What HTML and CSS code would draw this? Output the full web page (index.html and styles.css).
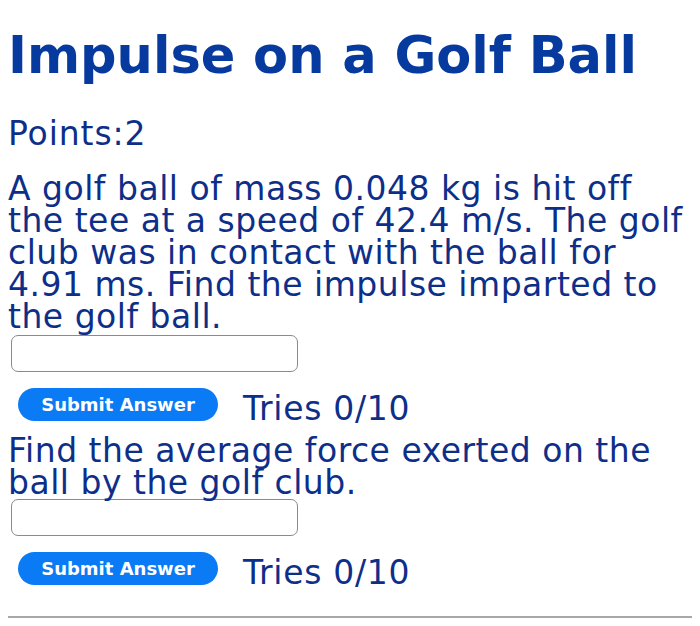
FILE: index.html
```html
<!DOCTYPE html>
<html>
<head>
<meta charset="utf-8">
<link rel="stylesheet" href="styles.css">
</head>
<body>
<div class="page">
  <h1 class="title">Impulse on a Golf Ball</h1>
  <div class="points">Points:2</div>
  <p class="question">A golf ball of mass 0.048 kg is hit off the tee at a speed of 42.4 m/s. The golf club was in contact with the ball for 4.91 ms. Find the impulse imparted to the golf ball.</p>
  <div class="answer"></div>
  <div class="submit-row">
    <button class="submit">Submit Answer</button>
    <span class="tries">Tries 0/10</span>
  </div>
  <p class="question q2">Find the average force exerted on the ball by the golf club.</p>
  <div class="answer a2"></div>
  <div class="submit-row">
    <button class="submit">Submit Answer</button>
    <span class="tries">Tries 0/10</span>
  </div>
  <div class="rule"></div>
</div>
</body>
</html>
```
FILE: styles.css
```css
html, body {
  margin: 0;
  padding: 0;
  background: #ffffff;
}
.page {
  padding: 0 0 0 8px;
  font-family: "DejaVu Sans", "Liberation Sans", sans-serif;
  color: #0d2f8a;
}
.title {
  margin: 0;
  padding-top: 26px;
  font-size: 51px;
  line-height: 60px;
  font-weight: bold;
  color: #063a9e;
}
.points {
  margin-top: 32px;
  font-size: 33px;
  line-height: 32px;
  letter-spacing: 0.9px;
}
.question {
  margin: 0;
  margin-top: 23px;
  width: 684px;
  font-size: 33px;
  line-height: 32px;
  letter-spacing: 0.5px;
}
.answer {
  margin-top: 2px;
  margin-left: 3px;
  width: 285px;
  height: 35px;
  border: 1.5px solid #8a8a8a;
  border-radius: 7px;
}
.submit-row {
  display: flex;
  align-items: flex-start;
  gap: 25px;
  margin-top: 16px;
  padding-left: 10px;
}
.submit {
  width: 200px;
  height: 33px;
  border: none;
  border-radius: 17px;
  background: #0a7af5;
  color: #ffffff;
  font-family: "DejaVu Sans", "Liberation Sans", sans-serif;
  font-weight: bold;
  font-size: 18px;
  padding: 0;
}
.tries {
  padding-top: 5px;
  font-size: 33px;
  line-height: 32px;
  letter-spacing: 0.7px;
}
.q2 {
  margin-top: 10px;
}
.a2 {
  margin-top: 0;
}
.rule {
  margin-top: 27px;
  height: 2px;
  background: #a8a8a8;
  width: 684px;
}
```
